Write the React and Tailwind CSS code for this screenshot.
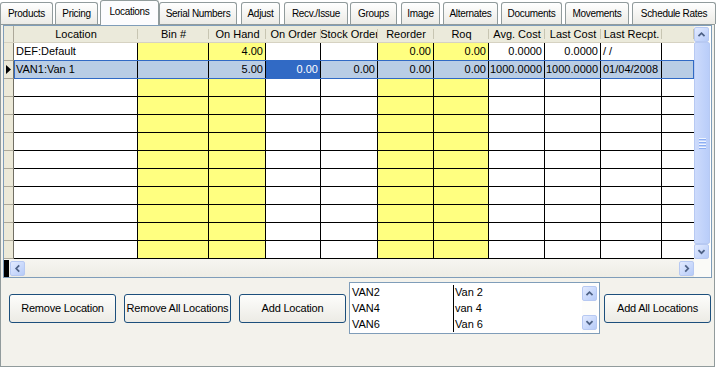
import React from "react";

const tabs = [
  { label: "Products", cls: "w-[53px]" },
  { label: "Pricing", cls: "w-[43px] ml-[2px]" },
  { label: "Locations", cls: "w-[59px] ml-[2px]", active: true },
  { label: "Serial Numbers", cls: "w-[78px]" },
  { label: "Adjust", cls: "w-[39px] ml-[4px]" },
  { label: "Recv./Issue", cls: "w-[64px] ml-[4px]" },
  { label: "Groups", cls: "w-[47px] ml-[2px]" },
  { label: "Image", cls: "w-[39px] ml-[4px]" },
  { label: "Alternates", cls: "w-[55px] ml-[3px]" },
  { label: "Documents", cls: "w-[61px] ml-[3px]" },
  { label: "Movements", cls: "w-[64px] ml-[3px]" },
  { label: "Schedule Rates", cls: "w-[84px] ml-[3px]" },
];

const cols = [
  { key: "loc", w: "w-[124px]", label: "Location", align: "left" },
  { key: "bin", w: "w-[71px]", label: "Bin #", yellow: true },
  { key: "hand", w: "w-[57px]", label: "On Hand", yellow: true },
  { key: "order", w: "w-[55px]", label: "On Order" },
  { key: "stock", w: "w-[57px]", label: "Stock Order" },
  { key: "reorder", w: "w-[56px]", label: "Reorder", yellow: true },
  { key: "roq", w: "w-[55px]", label: "Roq", yellow: true },
  { key: "avg", w: "w-[56px]", label: "Avg. Cost" },
  { key: "last", w: "w-[56px]", label: "Last Cost" },
  { key: "recpt", w: "w-[61px]", label: "Last Recpt.", align: "left" },
  { key: "blank", w: "flex-1", label: "", last: true },
];

const rows = [
  { loc: "DEF:Default", hand: "4.00", reorder: "0.00", roq: "0.00", avg: "0.0000", last: "0.0000", recpt: "/ /" },
  { loc: "VAN1:Van 1", hand: "5.00", order: "0.00", stock: "0.00", reorder: "0.00", roq: "0.00", avg: "1000.0000", last: "1000.0000", recpt: "01/04/2008", selected: true },
  ...Array.from({ length: 10 }, () => ({})),
];

const arrows = {
  up: "M4 9.5 L7.5 6 L11 9.5",
  down: "M4 6 L7.5 9.5 L11 6",
  left: "M9.5 4 L6 7.5 L9.5 11",
  right: "M6 4 L9.5 7.5 L6 11",
};

function ScrollBtn({ dir, className = "" }) {
  return (
    <div className={`w-[15px] h-[15px] rounded-[2px] border border-[#b7c9f2] bg-linear-to-br from-[#e3ebff] to-[#b6cbf8] flex items-center justify-center ${className}`}>
      <svg width="15" height="15" viewBox="0 0 15 15">
        <path d={arrows[dir]} fill="none" stroke="#4d6185" strokeWidth="2" />
      </svg>
    </div>
  );
}

function Button({ children, className = "" }) {
  return (
    <button className={`h-[29px] w-[107px] rounded-[3px] border border-[#1c4f7c] bg-linear-to-b from-[#fdfdfb] to-[#ecebe5] text-[11px] text-black tracking-[-0.2px] whitespace-nowrap ${className}`}>
      {children}
    </button>
  );
}

export default function App() {
  return (
    <div className="w-[716px] h-[367px] bg-white font-['Liberation_Sans',Arial,sans-serif] text-black overflow-hidden">
      {/* tab strip */}
      <div className="flex items-end h-[24px]">
        {tabs.map((t) =>
          t.active ? (
            <div
              key={t.label}
              className={`${t.cls} h-[25px] -mb-px relative z-10 border border-b-0 border-[#919b9c] rounded-t-[3px] bg-[#fcfcfe] flex items-center justify-center text-[10px] tracking-[-0.3px] pb-[3px]`}
            >
              {t.label}
            </div>
          ) : (
            <div
              key={t.label}
              className={`${t.cls} h-[22px] border border-b-0 border-[#919b9c] rounded-t-[3px] bg-linear-to-b from-[#ffffff] to-[#ecebe6] flex items-center justify-center text-[10px] tracking-[-0.3px] whitespace-nowrap`}
            >
              {t.label}
            </div>
          )
        )}
      </div>

      {/* tab page */}
      <div className="w-[715px] h-[343px] border border-[#919b9c] bg-[#f3f2ec] flex flex-col">
        {/* grid frame */}
        <div className="ml-[2px] w-[709px] h-[253px] border border-[#7f9db9] bg-white flex">
          <div className="w-[690px] flex flex-col">
            {/* header */}
            <div className="h-[17px] flex bg-[#ebeadb] border-b border-[#d6d2c2]">
              <div className="w-[10px] border-r border-[#aca899]" />
              {cols.map((c) => (
                <div key={c.key} className={`${c.w} relative flex items-center justify-center text-[11px] whitespace-nowrap overflow-hidden`}>
                  {c.label}
                  <div className="absolute right-0 top-[3px] bottom-[3px] w-px bg-[#c7c5b2]" />
                </div>
              ))}
            </div>

            {/* rows */}
            {rows.map((r, i) => (
              <div key={i} className="h-[18px] flex">
                <div className="w-[10px] bg-[#ece9d8] border-r border-[#716f64] border-b border-b-[#aca899] flex items-center justify-center">
                  {r.selected && (
                    <svg width="5" height="9" viewBox="0 0 5 9">
                      <path d="M0 0 L5 4.5 L0 9 Z" fill="#000" />
                    </svg>
                  )}
                </div>
                <div className="flex-1 flex relative">
                  {cols.map((c) => {
                    const focus = r.selected && c.key === "order";
                    let bg = "bg-white";
                    if (r.selected) bg = "bg-[#b9cde5]";
                    else if (c.yellow) bg = "bg-[#ffff80]";
                    if (focus) bg = "bg-[#316ac5] text-white";
                    return (
                      <div
                        key={c.key}
                        className={`${c.w} ${bg} border-b border-black ${c.last ? "" : "border-r"} flex items-center text-[11px] whitespace-nowrap overflow-hidden ${c.align === "left" ? "justify-start pl-[2px]" : "justify-end pr-[2px]"}`}
                      >
                        {r[c.key] || ""}
                      </div>
                    );
                  })}
                  {r.selected && (
                    <div className="absolute inset-x-0 -top-px bottom-0 border border-[#316ac5] pointer-events-none" />
                  )}
                </div>
              </div>
            ))}

            {/* horizontal scrollbar */}
            <div className="h-[18px] flex items-center bg-linear-to-b from-[#f6f5f1] to-[#eeede5]">
              <div className="w-[5px] h-[17px] bg-black" />
              <ScrollBtn dir="left" className="ml-[1px]" />
              <div className="flex-1" />
              <ScrollBtn dir="right" />
            </div>
          </div>

          {/* vertical scrollbar */}
          <div className="w-[16px] flex flex-col">
            <div className="flex-1 flex flex-col pt-[1px] bg-linear-to-r from-[#f3f1ec] to-[#fefefb]">
              <ScrollBtn dir="up" />
              <div className="flex-1 rounded-[2px] border border-[#b7c9f2] bg-linear-to-r from-[#cddbfc] to-[#b9cdf9] flex flex-col items-center justify-center gap-[1px]">
                {[0, 1, 2, 3].map((k) => (
                  <div key={k} className="w-[7px] h-[2px] border-t border-[#eef4fe] border-b border-b-[#8caef3]" />
                ))}
              </div>
              <ScrollBtn dir="down" />
            </div>
            <div className="h-[18px] bg-[#fafaf7]" />
          </div>
        </div>

        {/* bottom controls */}
        <div className="flex items-start pl-[8px]">
          <Button className="mt-[16px]">Remove Location</Button>
          <Button className="mt-[16px] ml-[8px]">Remove All Locations</Button>
          <Button className="mt-[16px] ml-[8px]">Add Location</Button>

          <div className="mt-[4px] ml-[3px] w-[251px] h-[52px] border border-[#7f9db9] bg-white flex">
            <div className="flex-1 flex pt-[1px]">
              <div className="w-[103px] flex flex-col text-[11px] pl-[2px]">
                <div className="h-[16px] leading-[16px]">VAN2</div>
                <div className="h-[16px] leading-[16px]">VAN4</div>
                <div className="h-[16px] leading-[16px]">VAN6</div>
              </div>
              <div className="w-px bg-black my-[1px]" />
              <div className="flex-1 flex flex-col text-[11px] pl-[1px]">
                <div className="h-[16px] leading-[16px]">Van 2</div>
                <div className="h-[16px] leading-[16px]">van 4</div>
                <div className="h-[16px] leading-[16px]">Van 6</div>
              </div>
            </div>
            <div className="w-[15px] mr-[2px] flex flex-col justify-between py-[3px] bg-[#fdfdfb]">
              <ScrollBtn dir="up" />
              <ScrollBtn dir="down" />
            </div>
          </div>

          <Button className="mt-[16px] ml-[4px]">Add All Locations</Button>
        </div>
      </div>
    </div>
  );
}
